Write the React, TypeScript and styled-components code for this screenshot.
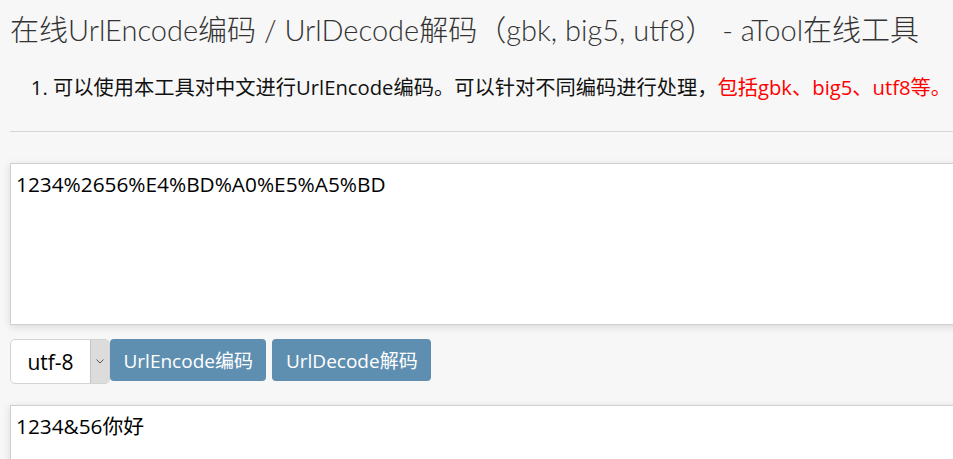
import React from "react";
import styled, { createGlobalStyle } from "styled-components";

const GlobalStyle = createGlobalStyle`
  html, body {
    margin: 0;
    padding: 0;
    background: #f7f7f7;
    overflow: hidden;
  }
  body {
    font-family: "Open Sans", "Noto Sans CJK SC", sans-serif;
    color: #111;
  }
`;

const Page = styled.div`
  padding: 0 0 0 10px;
  width: 1100px;
`;

const Title = styled.h1`
  margin: 0;
  padding-top: 11px;
  height: 41px;
  line-height: 38px;
  font-family: "Lato", "Noto Sans CJK SC", sans-serif;
  font-size: 29px;
  font-weight: 300;
  color: #333;
  white-space: nowrap;
`;

const Notes = styled.ol`
  margin: 0;
  padding: 20px 0 0 43px;
  height: 79px;
  box-sizing: border-box;
  font-size: 20.25px;
  line-height: 30px;
  white-space: nowrap;
`;

const Red = styled.span`
  color: #ff0000;
`;

const Rule = styled.hr`
  margin: 0;
  border: 0;
  border-top: 1px solid #d6d6d6;
`;

const Area = styled.textarea<{ $top: number; $rows: number }>`
  display: block;
  box-sizing: border-box;
  margin-top: ${(p) => p.$top}px;
  width: 1040px;
  height: ${(p) => p.$rows}px;
  padding: 6px 5px;
  border: 1px solid #cfcfcf;
  background: #fff;
  box-shadow: 0 2px 8px rgba(0, 0, 0, 0.12);
  font-family: "Open Sans", "Noto Sans CJK SC", sans-serif;
  font-size: 20.8px;
  line-height: 28px;
  color: #000;
  resize: none;
  outline: none;
`;

const Toolbar = styled.div`
  display: flex;
  align-items: flex-start;
  margin-top: 14px;
  height: 45px;
`;

const SelectBox = styled.div`
  display: flex;
  width: 100px;
  height: 45px;
  box-sizing: border-box;
  border: 1px solid #d4d4d4;
  border-radius: 5px;
  background: #fff;
  overflow: hidden;
`;

const SelectValue = styled.div`
  flex: 1;
  display: flex;
  align-items: center;
  justify-content: center;
  font-size: 21px;
  color: #000;
`;

const SelectArrow = styled.div`
  width: 18px;
  display: flex;
  align-items: center;
  justify-content: center;
  background: #dcdcdc;
  border-left: 1px solid #c4c4c4;
`;

const Button = styled.button<{ $gap: number }>`
  margin-left: ${(p) => p.$gap}px;
  height: 42px;
  padding: 0 13.5px;
  border: 0;
  border-radius: 4px;
  background: #5f8fb0;
  color: #fff;
  font-family: "Open Sans", "Noto Sans CJK SC", sans-serif;
  font-size: 19px;
  cursor: pointer;
`;

export default function App() {
  return (
    <>
      <GlobalStyle />
      <Page>
        <Title>在线UrlEncode编码 / UrlDecode解码（gbk, big5, utf8） - aTool在线工具</Title>
        <Notes>
          <li>
            可以使用本工具对中文进行UrlEncode编码。可以针对不同编码进行处理，
            <Red>包括gbk、big5、utf8等。</Red>
          </li>
        </Notes>
        <Rule />
        <Area $top={31} $rows={162} defaultValue="1234%2656%E4%BD%A0%E5%A5%BD" />
        <Toolbar>
          <SelectBox>
            <SelectValue>utf-8</SelectValue>
            <SelectArrow>
              <svg width="8" height="5" viewBox="0 0 8 5">
                <path d="M0.5 0.5 L4 4 L7.5 0.5" fill="none" stroke="#555" strokeWidth="1" />
              </svg>
            </SelectArrow>
          </SelectBox>
          <Button $gap={0}>UrlEncode编码</Button>
          <Button $gap={6}>UrlDecode解码</Button>
        </Toolbar>
        <Area $top={21} $rows={120} defaultValue="1234&56你好" />
      </Page>
    </>
  );
}
